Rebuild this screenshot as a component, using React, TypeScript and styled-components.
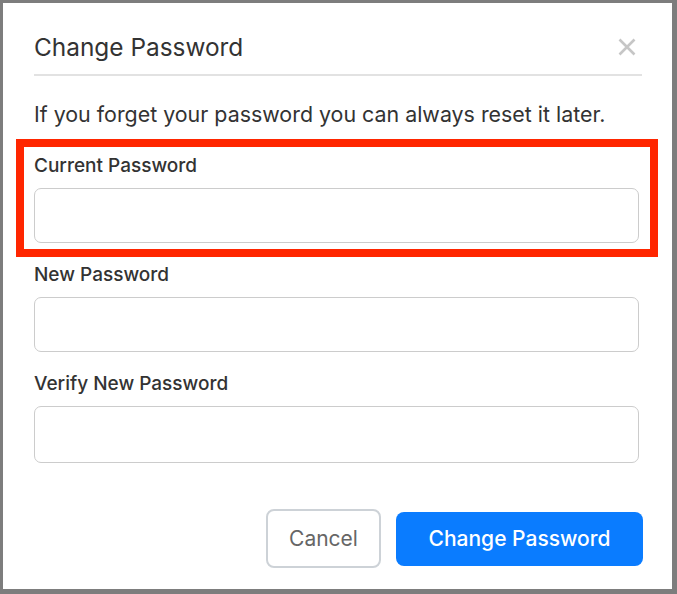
import React from "react";
import styled, { createGlobalStyle } from "styled-components";

const GlobalStyle = createGlobalStyle`
  html, body {
    margin: 0;
    padding: 0;
    background: #7d7d7d;
  }
  * { box-sizing: border-box; }
`;

const Backdrop = styled.div`
  width: 677px;
  height: 594px;
  padding: 3px 5px 5px 3px;
  background: #7d7d7d;
`;

const Modal = styled.div`
  width: 669px;
  height: 586px;
  background: #ffffff;
  padding: 29px 30px 21px 31px;
  display: flex;
  flex-direction: column;
  font-family: Inter, "Helvetica Neue", Arial, sans-serif;
  color: #333333;
`;

const Header = styled.div`
  display: flex;
  align-items: center;
  justify-content: space-between;
  padding-bottom: 12px;
  border-bottom: 2px solid #e2e2e2;
`;

const Title = styled.h2`
  margin: 0;
  font-size: 24.4px;
  line-height: 30px;
  font-weight: 400;
  color: #333333;
`;

const CloseButton = styled.button`
  border: none;
  background: none;
  padding: 0;
  margin-right: 5px;
  width: 20px;
  height: 20px;
  display: flex;
  align-items: center;
  justify-content: center;
  cursor: pointer;
`;

const Intro = styled.p`
  margin: 24px 0 0;
  font-size: 21.4px;
  line-height: 28px;
  font-weight: 400;
  color: #333333;
  white-space: nowrap;
`;

const Fields = styled.div`
  margin-top: 26px;
  display: flex;
  flex-direction: column;
  gap: 20px;
`;

const Field = styled.div<{ $highlight?: boolean }>`
  position: relative;
  display: flex;
  flex-direction: column;
  gap: 10px;

  ${(p) =>
    p.$highlight &&
    `
    &::after {
      content: "";
      position: absolute;
      left: -18px;
      right: -16px;
      top: -15px;
      bottom: -14px;
      border: 8px solid #ff2600;
      pointer-events: none;
    }
  `}
`;

const Label = styled.label`
  font-size: 19px;
  line-height: 24px;
  font-weight: 500;
  color: #333333;
`;

const Input = styled.input<{ $tall?: boolean }>`
  width: 605px;
  height: ${(p) => (p.$tall ? "57px" : "55px")};
  border: 1.5px solid #cccccc;
  border-radius: 7px;
  padding: 0 14px;
  font-family: inherit;
  font-size: 19px;
  outline: none;
  background: #fff;
`;

const Footer = styled.div`
  margin-top: auto;
  margin-right: -1px;
  display: flex;
  justify-content: flex-end;
  align-items: center;
  gap: 15px;
`;

const Button = styled.button<{ $primary?: boolean }>`
  font-family: inherit;
  font-size: 21px;
  border-radius: 8px;
  cursor: pointer;
  ${(p) =>
    p.$primary
      ? `
    width: 247px;
    height: 54px;
    background: #0a7cff;
    border: none;
    color: #ffffff;
    font-weight: 500;
  `
      : `
    width: 115px;
    height: 59px;
    background: #ffffff;
    border: 2px solid #cdd2d7;
    color: #666666;
    font-weight: 400;
  `}
`;

const CloseIcon = () => (
  <svg width="18" height="18" viewBox="0 0 18 18">
    <path d="M1.5 1.5 L16.5 16.5 M16.5 1.5 L1.5 16.5" stroke="#c6c6c6" strokeWidth="2.6" strokeLinecap="butt" />
  </svg>
);

export default function App() {
  return (
    <>
      <GlobalStyle />
      <Backdrop>
        <Modal>
          <Header>
            <Title>Change Password</Title>
            <CloseButton aria-label="Close">
              <CloseIcon />
            </CloseButton>
          </Header>
          <Intro>If you forget your password you can always reset it later.</Intro>
          <Fields>
            <Field $highlight>
              <Label>Current Password</Label>
              <Input type="password" />
            </Field>
            <Field>
              <Label>New Password</Label>
              <Input type="password" />
            </Field>
            <Field>
              <Label>Verify New Password</Label>
              <Input type="password" $tall />
            </Field>
          </Fields>
          <Footer>
            <Button>Cancel</Button>
            <Button $primary>Change Password</Button>
          </Footer>
        </Modal>
      </Backdrop>
    </>
  );
}
